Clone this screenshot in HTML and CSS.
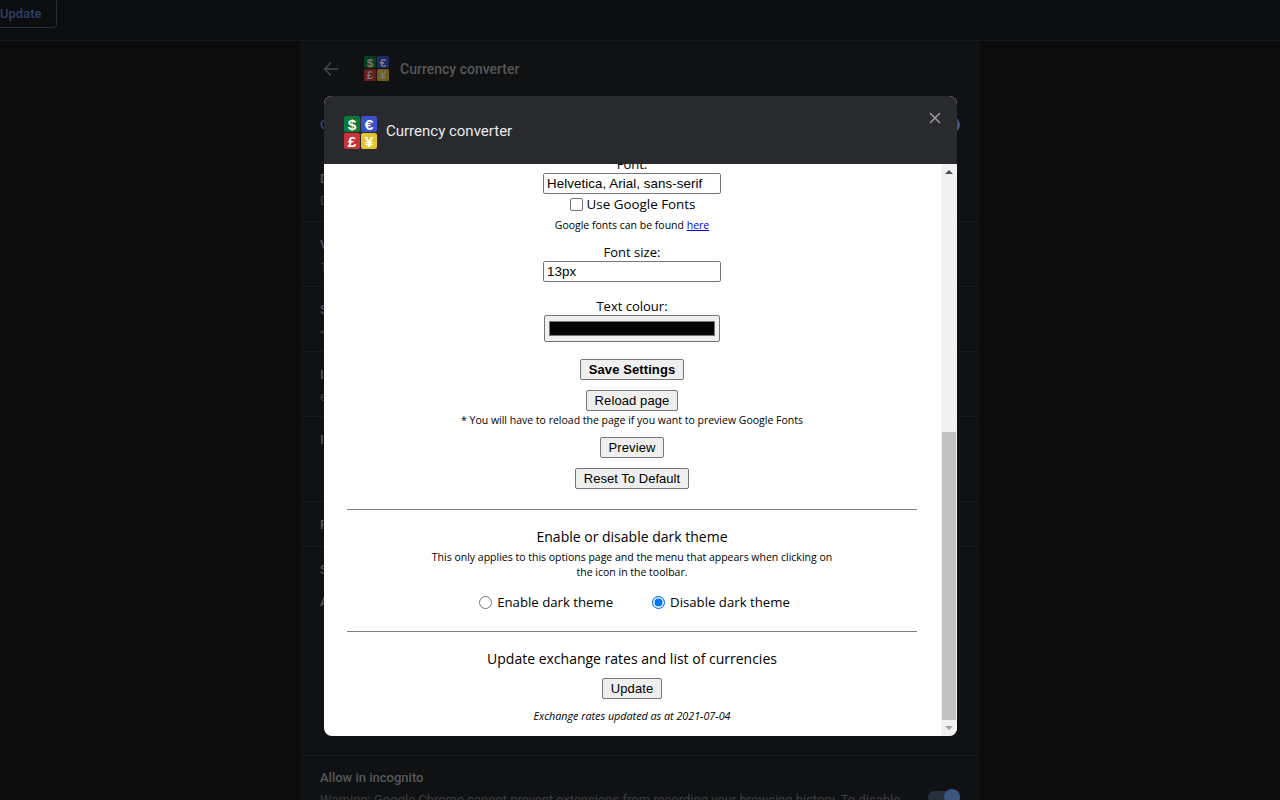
FILE: index.html
```html
<!DOCTYPE html>
<html lang="en">
<head>
    <meta charset="UTF-8">
    <title>Currency converter options</title>
    <link rel="stylesheet" href="styles.css">
</head>
<body>
    <div class="topbar">
        <button class="update-ext">Update</button>
    </div>

    <div class="page">
        <div class="panel">
            <div class="panel-title">
                <svg class="back" width="16" height="16" viewBox="0 0 16 16"><path d="M15.5 8H1.5M8 1.5L1.5 8L8 14.5" fill="none" stroke="#47494c" stroke-width="1.5"/></svg>
                <svg class="logo-small" width="25" height="25" viewBox="0 0 32 32">
                    <rect width="15.5" height="15.5" rx="2" fill="#06401f"/>
                    <rect x="16.5" width="15.5" height="15.5" rx="2" fill="#1c2a66"/>
                    <rect y="16.5" width="15.5" height="15.5" rx="2" fill="#6b1c1f"/>
                    <rect x="16.5" y="16.5" width="15.5" height="15.5" rx="2" fill="#6d5f18"/>
                    <text x="7.7" y="13.5" class="logo-text dim">$</text>
                    <text x="24.2" y="13.5" class="logo-text dim">€</text>
                    <text x="7.7" y="30" class="logo-text dim">£</text>
                    <text x="24.2" y="30" class="logo-text dim">¥</text>
                </svg>
                <span>Currency converter</span>
            </div>
            <div class="row row-on"><div class="on">On</div><div class="toggle"></div></div>
            <div class="row h66"><div class="name">Description</div><div class="sub">Displays prices in your currency</div></div>
            <div class="row h65"><div class="name">Version</div><div class="sub">1.0</div></div>
            <div class="row h65"><div class="name">Size</div><div class="sub">&lt; 1 MB</div></div>
            <div class="row h65"><div class="name">ID</div><div class="sub">e</div></div>
            <div class="row h85"><div class="name">Inspect views</div></div>
            <div class="row h45"><div class="name">Permissions</div></div>
            <div class="row h209"><div class="name">Site access</div><div class="name allow">Allow</div></div>
            <div class="row incognito">
                <div>
                    <div class="name">Allow in incognito</div>
                    <div class="sub">Warning: Google Chrome cannot prevent extensions from recording your browsing history. To disable</div>
                </div>
                <div class="toggle"></div>
            </div>
        </div>
    </div>

    <div class="dialog">
        <div class="dialog-head">
            <svg width="33" height="33" viewBox="0 0 32 32">
                <rect width="15.5" height="15.5" rx="2" fill="#0a7a3a"/>
                <rect x="16.5" width="15.5" height="15.5" rx="2" fill="#3a50c8"/>
                <rect y="16.5" width="15.5" height="15.5" rx="2" fill="#cc3338"/>
                <rect x="16.5" y="16.5" width="15.5" height="15.5" rx="2" fill="#e3c52f"/>
                <text x="7.7" y="13.5" class="logo-text">$</text>
                <text x="24.2" y="13.5" class="logo-text">€</text>
                <text x="7.7" y="30" class="logo-text">£</text>
                <text x="24.2" y="30" class="logo-text">¥</text>
            </svg>
            <span class="dialog-title">Currency converter</span>
            <svg class="close" width="12" height="12" viewBox="0 0 12 12"><path d="M1 1L11 11M11 1L1 11" stroke="#9a9b9d" stroke-width="1.5"/></svg>
        </div>
        <div class="dialog-body">
            <div class="content">
                <div class="label clipped">Font:</div>
                <div class="textbox">Helvetica, Arial, sans-serif</div>
                <div class="check-line"><span class="check"></span>Use Google Fonts</div>
                <div class="small found">Google fonts can be found <a href="#">here</a></div>
                <div class="label size-label">Font size:</div>
                <div class="textbox">13px</div>
                <div class="label colour-label">Text colour:</div>
                <div class="colour"><span></span></div>
                <button class="btn save">Save Settings</button>
                <button class="btn reload">Reload page</button>
                <div class="small note">* You will have to reload the page if you want to preview Google Fonts</div>
                <button class="btn preview">Preview</button>
                <button class="btn reset">Reset To Default</button>
                <div class="rule first"></div>
                <div class="heading dark-head">Enable or disable dark theme</div>
                <div class="small desc">This only applies to this options page and the menu that appears when clicking on<br>the icon in the toolbar.</div>
                <div class="radios">
                    <span class="radio-item"><span class="radio"></span>Enable dark theme</span>
                    <span class="radio-item"><span class="radio on-radio"></span>Disable dark theme</span>
                </div>
                <div class="rule second"></div>
                <div class="heading update-head">Update exchange rates and list of currencies</div>
                <button class="btn update">Update</button>
                <div class="small stamp">Exchange rates updated as at 2021-07-04</div>
            </div>
            <div class="scrollbar">
                <div class="arrow up"></div>
                <div class="track"><div class="thumb"></div></div>
                <div class="arrow down"></div>
            </div>
        </div>
    </div>
</body>
</html>
```

FILE: styles.css
```css
* {
    box-sizing: border-box;
}

html, body {
    height: 100%;
}

body {
    margin: 0;
    overflow: hidden;
    background-color: #0b0b0c;
    font-family: Roboto, sans-serif;
}

.topbar {
    height: 41px;
    overflow: hidden;
    background-color: #0c0d0e;
    border-bottom: 1px solid #17181a;
}

.update-ext {
    display: block;
    height: 30px;
    width: 57px;
    margin-top: -2px;
    padding: 0 16px 0 0;
    background: none;
    border: 1px solid #2b2d30;
    border-left: 0;
    border-radius: 0 4px 4px 0;
    color: #2c4069;
    font-family: Roboto, sans-serif;
    font-size: 13px;
    font-weight: 500;
    text-align: right;
}

.page {
    display: flex;
    justify-content: center;
}

.panel {
    width: 680px;
    height: 759px;
    overflow: hidden;
    background-color: #101113;
    border-left: 1px solid #0d0e0f;
    border-right: 1px solid #0d0e0f;
}

.panel-title {
    display: flex;
    align-items: center;
    height: 55px;
    padding: 0 19px 0 22px;
    color: #55575a;
    font-size: 14px;
    font-weight: 500;
}

.back {
    margin-right: 25px;
}

.logo-small {
    margin-right: 11px;
}

.logo-text {
    font-family: "Liberation Sans", sans-serif;
    font-size: 15px;
    font-weight: 700;
    text-anchor: middle;
    fill: #ffffff;
}

.logo-text.dim {
    fill: #77797b;
}

.row {
    display: flex;
    flex-direction: column;
    padding: 14px 19px 0;
    border-bottom: 1px solid #1a1b1d;
}

.row-on {
    flex-direction: row;
    justify-content: space-between;
    height: 60px;
    padding-top: 21px;
    border-bottom: 0;
}

.on {
    color: #2f4775;
    font-size: 13px;
    font-weight: 500;
}

.toggle {
    position: relative;
    flex: none;
    width: 32px;
    height: 12px;
    margin-top: 2px;
    border-radius: 6px;
    background-color: #26303f;
}

.toggle::after {
    content: "";
    position: absolute;
    right: 0;
    top: -2px;
    width: 16px;
    height: 16px;
    border-radius: 50%;
    background-color: #3c557f;
}

.h66 { height: 66px; }
.h65 { height: 65px; }
.h85 { height: 85px; }
.h45 { height: 45px; }
.h209 { height: 209px; }

.name {
    color: #55575a;
    font-size: 13px;
    font-weight: 500;
    line-height: 18px;
}

.sub {
    margin-top: 4px;
    color: #3c3e41;
    font-size: 13px;
    line-height: 18px;
    white-space: nowrap;
}

.allow {
    margin-top: 14px;
}

.incognito {
    flex-direction: row;
    justify-content: space-between;
    gap: 20px;
    padding-top: 13px;
    border-bottom: 0;
}

.incognito .toggle {
    margin-top: 22px;
}

/* options dialog */
.dialog {
    position: fixed;
    left: 324px;
    top: 96px;
    width: 633px;
    height: 640px;
    display: flex;
    flex-direction: column;
    overflow: hidden;
    border-radius: 8px;
    background-color: #ffffff;
}

.dialog-head {
    position: relative;
    display: flex;
    align-items: center;
    flex: none;
    height: 68px;
    padding: 4px 0 0 20px;
    background-color: #292a2d;
}

.dialog-title {
    margin-left: 9px;
    margin-top: -2px;
    color: #e8eaed;
    font-size: 15px;
}

.close {
    position: absolute;
    top: 16px;
    right: 16px;
}

.dialog-body {
    display: flex;
    flex: 1;
    min-height: 0;
}

.content {
    flex: 1;
    min-width: 0;
    overflow: hidden;
    display: flex;
    flex-direction: column;
    align-items: center;
    padding-right: 1px;
    color: #000000;
    font-family: "Open Sans", sans-serif;
    font-size: 13px;
}

.label {
    font-size: 13px;
    line-height: 18px;
}

.clipped {
    margin-top: -9px;
}

.textbox {
    width: 178px;
    height: 21px;
    padding: 0 3px;
    border: 1px solid #767676;
    border-radius: 2px;
    font-family: "Liberation Sans", sans-serif;
    font-size: 13.33px;
    line-height: 19px;
    letter-spacing: 0.07px;
}

.check-line {
    display: flex;
    align-items: center;
    height: 20px;
    margin-left: 1px;
    font-size: 13.4px;
}

.check {
    width: 13px;
    height: 13px;
    margin-right: 4px;
    border: 1px solid #767676;
    border-radius: 2px;
    background-color: #ffffff;
}

.small {
    font-size: 10.5px;
    line-height: 15px;
    text-align: center;
}

.found {
    margin-top: 4px;
}

.found a {
    color: #0000ee;
}

.size-label {
    margin-top: 10px;
}

.colour-label {
    margin-top: 15px;
}

.colour {
    width: 176px;
    height: 27px;
    padding: 5px 4px;
    border: 1px solid #767676;
    border-radius: 2px;
    background-color: #efefef;
}

.colour span {
    display: block;
    height: 100%;
    background-color: #000000;
    border: 1px solid #767676;
}

.btn {
    height: 21px;
    padding: 0 8px;
    border: 1px solid #767676;
    border-radius: 2px;
    background-color: #efefef;
    color: #000000;
    font-family: "Liberation Sans", sans-serif;
    font-size: 13px;
    letter-spacing: 0.1px;
}

.save {
    margin-top: 17px;
    font-weight: 700;
}

.reload {
    margin-top: 10px;
}

.note {
    margin-top: 2px;
}

.preview {
    margin-top: 9px;
}

.reset {
    margin-top: 10px;
    letter-spacing: 0.03px;
}

.rule {
    flex: none;
    width: 570px;
    height: 1px;
    background-color: #808080;
}

.first {
    margin-top: 20px;
}

.heading {
    font-size: 14px;
    line-height: 20px;
}

.dark-head {
    margin-top: 17px;
}

.desc {
    margin-top: 3px;
    width: 420px;
}

.radios {
    display: flex;
    gap: 39px;
    margin-top: 13px;
    margin-left: 5px;
    font-size: 13.2px;
    line-height: 18px;
}

.radio-item {
    display: flex;
    align-items: center;
}

.radio {
    width: 13px;
    height: 13px;
    margin-right: 5px;
    border: 1px solid #767676;
    border-radius: 50%;
    background-color: #ffffff;
}

.on-radio {
    border: 1px solid #0075ff;
    box-shadow: inset 0 0 0 1.5px #ffffff;
    background-color: #0075ff;
}

.second {
    margin-top: 20px;
}

.update-head {
    margin-top: 17px;
}

.update {
    margin-top: 9px;
}

.stamp {
    margin-top: 10px;
    font-size: 10.75px;
    font-style: italic;
}

.scrollbar {
    display: flex;
    flex-direction: column;
    flex: none;
    width: 16px;
    background-color: #f1f1f1;
}

.arrow {
    position: relative;
    flex: none;
    height: 17px;
}

.arrow::after {
    content: "";
    position: absolute;
    left: 4px;
    border-left: 4px solid transparent;
    border-right: 4px solid transparent;
}

.up::after {
    top: 6px;
    border-bottom: 4px solid #505050;
}

.down::after {
    top: 6px;
    border-top: 4px solid #a3a3a3;
}

.track {
    flex: 1;
    padding-top: 251px;
}

.thumb {
    height: 288px;
    margin: 0 1px;
    background-color: #c1c1c1;
}
```
